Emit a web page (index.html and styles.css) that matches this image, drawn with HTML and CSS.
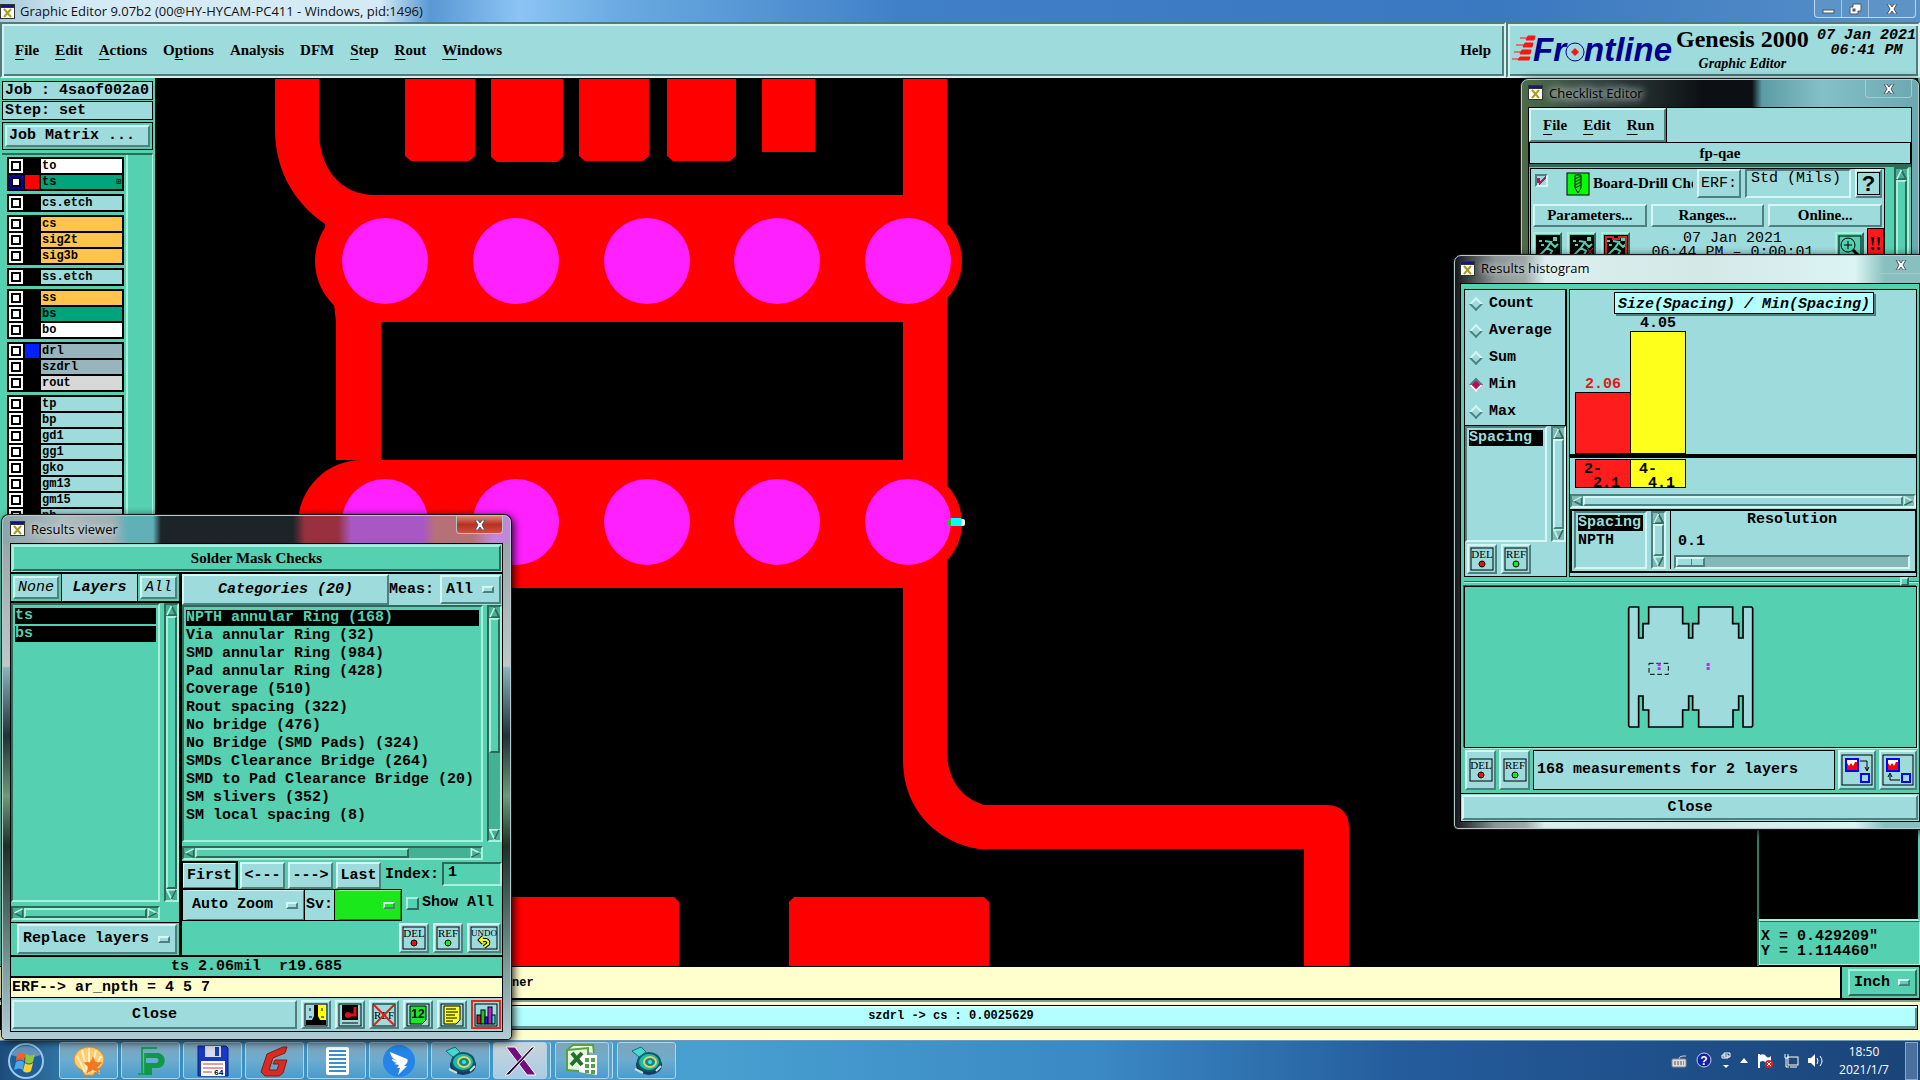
FILE: index.html
```html
<!DOCTYPE html>
<html lang="en">
<head>
    <meta charset="UTF-8">
    <meta name="viewport" content="width=device-width, initial-scale=1.0">
    <title>Graphic Editor 9.07b2</title>
    <link rel="stylesheet" href="styles.css">
</head>
<body>

<!-- shared icons -->
<svg class="sprite" width="0" height="0">
    <symbol id="xwin" viewBox="0 0 15 15">
        <rect width="15" height="15" fill="#333"/><rect x="1" y="4" width="13" height="10" fill="#fff"/><rect x="1" y="1" width="13" height="2" fill="#14148c"/>
        <path d="M4 5l7 8M11 5l-7 8" stroke="#a8a020" stroke-width="2"/>
    </symbol>
    <symbol id="close-x" viewBox="0 0 12 10">
        <path d="M1 0h3l2 3 2-3h3L8 5l3 5H8L6 7l-2 3H1l3-5z" fill="#fff" stroke="#4a5566" stroke-width="1"/>
    </symbol>
    <symbol id="up" viewBox="0 0 12 12">
        <path d="M6 1L1 11H11Z" fill="none" stroke="#2c6b5a" stroke-width="2"/><path d="M6 1L1 11" stroke="#b8f4e4" stroke-width="2"/>
    </symbol>
    <symbol id="down" viewBox="0 0 12 12">
        <path d="M1 1H11L6 11Z" fill="none" stroke="#b8f4e4" stroke-width="2"/><path d="M11 1L6 11" stroke="#2c6b5a" stroke-width="2"/>
    </symbol>
    <symbol id="left" viewBox="0 0 12 12">
        <path d="M11 1V11L1 6Z" fill="none" stroke="#2c6b5a" stroke-width="2"/><path d="M11 1L1 6" stroke="#b8f4e4" stroke-width="2"/>
    </symbol>
    <symbol id="right" viewBox="0 0 12 12">
        <path d="M1 11V1L11 6Z" fill="none" stroke="#b8f4e4" stroke-width="2"/><path d="M1 11L11 6" stroke="#2c6b5a" stroke-width="2"/>
    </symbol>
    <symbol id="runner" viewBox="0 0 24 24">
        <rect width="24" height="24" fill="#000"/>
        <path d="M3 6h3M5 10h3M9 6l6 1-4 6 5 3-3 6M11 13l-7 7M15 8l4 4 3-3M18 3h2v2h-2z" fill="none" stroke="#55d0b0" stroke-width="2"/>
    </symbol>
    <symbol id="disk-pc" viewBox="0 0 34 32">
        <ellipse cx="19" cy="20" rx="13" ry="10" fill="#193a5c"/><ellipse cx="19" cy="17" rx="11" ry="9" fill="#20b8a8" stroke="#0c5a60" stroke-width="2"/>
        <ellipse cx="20" cy="17" rx="6" ry="5" fill="#0c8c88" stroke="#e8d060" stroke-width="2"/><ellipse cx="20" cy="17" rx="2" ry="2" fill="#50e0c8"/>
        <path d="M2 6l9-4 5 5-7 5z" fill="#48d8d0" stroke="#107078"/><path d="M5 24l8 4M26 26l5-5" stroke="#c8dce0" stroke-width="2"/>
    </symbol>
</svg>

<header class="titlebar">
    <svg class="win-icon"><use href="#xwin"/></svg>
    <span>Graphic Editor 9.07b2 (00@HY-HYCAM-PC411 - Windows, pid:1496)</span>
    <div class="win-buttons">
        <button aria-label="Minimize"><svg width="13" height="12"><rect x="1" y="7" width="11" height="3" fill="#fff" stroke="#4a5566"/></svg></button>
        <button aria-label="Restore"><svg width="13" height="12"><path d="M4 1h8v7h-3v3H1V4h3z" fill="#fff" stroke="#4a5566"/><rect x="4" y="6" width="2" height="2" fill="#3c6ba0" stroke="#4a5566"/></svg></button>
        <button class="wide" aria-label="Close"><svg width="12" height="10"><use href="#close-x"/></svg></button>
    </div>
</header>

<div class="topbar">
    <nav class="menubar frame">
        <button><u>F</u>ile</button>
        <button><u>E</u>dit</button>
        <button><u>A</u>ctions</button>
        <button>O<u>p</u>tions</button>
        <button>Analysis</button>
        <button>DFM</button>
        <button><u>S</u>tep</button>
        <button><u>R</u>out</button>
        <button><u>W</u>indows</button>
        <button class="help">Help</button>
    </nav>
    <div class="brand frame">
        <svg class="logo" viewBox="0 0 162 30">
            <g stroke="#ff1414" fill="#ff1414"><path d="M8 3h14M4 10h16M2 17h16M0 24h16" stroke-width="1"/><path d="M16 1h7l-1 4h-8zM13 8h8l-1 4h-9zM10 15h9l-1 4h-10zM8 22h10l-1 3h-11z"/></g>
            <text x="21" y="26" class="logo-text">Fr</text>
            <text x="72" y="26" class="logo-text">ntline</text>
            <circle cx="63" cy="17" r="9" fill="none" stroke="#00008b" stroke-width="1"/><path d="M63 13l4 4-4 4-4-4z" fill="#ff1414"/>
        </svg>
        <div class="product"><strong>Genesis 2000</strong><em>Graphic Editor</em></div>
        <div class="clock">07 Jan 2021<br>06:41 PM</div>
    </div>
</div>

<main class="workspace">
    <aside class="sidebar">
        <div class="job">Job : 4saof002a0</div>
        <div class="job">Step: set</div>
        <div class="matrix"><button class="btn">Job Matrix ...</button></div>
        <div class="layers">
            <div class="layer-list">
                <div class="group">
                    <label class="layer white"><input type="checkbox"><i></i><span>to</span></label>
                    <label class="layer green current"><input type="checkbox"><i class="red"></i><span>ts<b>⊞</b></span></label>
                </div>
                <div class="group">
                    <label class="layer"><input type="checkbox"><i></i><span>cs.etch</span></label>
                </div>
                <div class="group">
                    <label class="layer orange"><input type="checkbox"><i></i><span>cs</span></label>
                    <label class="layer orange"><input type="checkbox"><i></i><span>sig2t</span></label>
                    <label class="layer orange"><input type="checkbox"><i></i><span>sig3b</span></label>
                </div>
                <div class="group">
                    <label class="layer"><input type="checkbox"><i></i><span>ss.etch</span></label>
                </div>
                <div class="group">
                    <label class="layer orange"><input type="checkbox"><i></i><span>ss</span></label>
                    <label class="layer green"><input type="checkbox"><i></i><span>bs</span></label>
                    <label class="layer white"><input type="checkbox"><i></i><span>bo</span></label>
                </div>
                <div class="group">
                    <label class="layer slate"><input type="checkbox"><i class="blue"></i><span>drl</span></label>
                    <label class="layer slate"><input type="checkbox"><i></i><span>szdrl</span></label>
                    <label class="layer grey"><input type="checkbox"><i></i><span>rout</span></label>
                </div>
                <div class="group">
                    <label class="layer"><input type="checkbox"><i></i><span>tp</span></label>
                    <label class="layer"><input type="checkbox"><i></i><span>bp</span></label>
                    <label class="layer"><input type="checkbox"><i></i><span>gd1</span></label>
                    <label class="layer"><input type="checkbox"><i></i><span>gg1</span></label>
                    <label class="layer"><input type="checkbox"><i></i><span>gko</span></label>
                    <label class="layer"><input type="checkbox"><i></i><span>gm13</span></label>
                    <label class="layer"><input type="checkbox"><i></i><span>gm15</span></label>
                    <label class="layer"><input type="checkbox"><i></i><span>ph</span></label>
                </div>
            </div>
        </div>
    </aside>

    <section class="canvas">
        <svg viewBox="155 79 1602 888" preserveAspectRatio="xMinYMin slice">
            <g fill="#f00">
                <path d="M275 79H319V130C319 168 340 195 375 195H903V79H947V222H903L336 322L325 224C290 200 275 165 275 130Z"/>
                <path d="M405 79h70v77l-6 5h-58l-6-5zM491 79h72v78l-6 5h-60l-6-5zM579 79h70v77l-6 5h-58l-6-5zM667 79h69v77l-6 5h-57l-6-5zM762 79h53v73h-53z"/>
                <path d="M350 195H947V322H381V460H903V322H947V753C948 781 962 798 984 805H1327Q1349 806 1349 828V967H1304V849H979C935 842 903 808 903 760V588H362V460H336V300Z"/>
                <circle cx="376" cy="261" r="61"/>
                <circle cx="908" cy="261" r="54"/>
                <circle cx="362" cy="524" r="64"/>
                <circle cx="908" cy="523" r="54"/>
                <path d="M480 897H674l5 5V967H480zM789 902l5-5H984l5 5V967H789z"/>
            </g>
            <g fill="#ff20ff">
                <circle cx="385" cy="261" r="43"/><circle cx="516" cy="261" r="43"/><circle cx="647" cy="261" r="43"/><circle cx="777" cy="261" r="43"/><circle cx="908" cy="261" r="43"/>
                <circle cx="385" cy="522" r="43"/><circle cx="516" cy="522" r="43"/><circle cx="647" cy="522" r="43"/><circle cx="777" cy="522" r="43"/><circle cx="908" cy="522" r="43"/>
            </g>
            <rect x="948" y="519" width="5" height="7" fill="#18c818"/><rect x="960" y="519" width="5" height="7" rx="2" fill="#fff"/><rect x="951" y="518" width="10" height="8" fill="#0ff"/>
        </svg>
    </section>

    <aside class="overview">
        <div class="overview-map"></div>
        <div class="coords">X = 0.429209"<br>Y = 1.114460"</div>
    </aside>
</main>

<div class="message-row">
    <div class="message">ner</div>
    <div class="units"><span class="option teal"><select aria-label="Units"><option>Inch</option></select><i></i></span></div>
</div>
<div class="status"><div>szdrl -&gt; cs : 0.0025629</div></div>

<footer class="taskbar">
    <button class="start" aria-label="Start">
        <svg width="40" height="38" viewBox="0 0 40 38"><circle cx="20" cy="19" r="17" fill="#1f5f98" stroke="#9cc8e8" stroke-width="2"/><path d="M5 13a16 14 0 0 1 30 0q-15 5-30 0" fill="#8cb8d8" opacity=".6"/>
        <path d="M11 12q4-3 8 0l-1 7q-4-3-8 0z" fill="#f0622c"/><path d="M20 12q4 3 9 0l-2 8q-4 3-8 0z" fill="#8cc83c"/><path d="M10 20q4-3 8 0l-1 8q-4-3-9 0z" fill="#48a8f0"/><path d="M19 21q4 3 8 0l-2 8q-4 3-8 0z" fill="#ffd030"/></svg>
    </button>
    <button class="task" aria-label="Shell"><svg width="34" height="32"><path d="M13 30L10 25C2 22 0 13 4 9 7 4 12 2 17 2s10 2 13 7c4 4 2 13-6 16l-3 5z" fill="#ffcc70" stroke="#e89030"/><path d="M17 3v24M10 5l5 22M24 5l-5 22M5 11l8 16M29 11l-8 16" stroke="#fff0c0" stroke-width="2"/><path d="M21 11l3 6h7l-5 5 2 7-7-4-7 4 2-7-5-5h7z" fill="#f07820" stroke="#ffd090" stroke-dasharray="2"/></svg></button>
    <button class="task" aria-label="P client"><svg width="34" height="32"><path d="M8 29V3h15M4 29h7V8" stroke="#18a050" fill="none" stroke-width="2"/><path d="M12 8h12c9 1 9 14 0 15h-6v7h-7V18h12q3-3 0-5H12z" fill="#109848"/></svg></button>
    <button class="task" aria-label="Disk"><svg width="34" height="32"><path d="M2 1h28l2 2v28H2z" fill="#1838c8" stroke="#0c1c80"/><rect x="9" y="1" width="16" height="11" fill="#d8dce8"/><rect x="19" y="2" width="4" height="9" fill="#1838c8"/><rect x="5" y="16" width="24" height="15" fill="#fff"/><path d="M7 19h20M7 23h20M7 27h9" stroke="#c04040"/><text x="18" y="30" class="disk-text">64</text></svg></button>
    <button class="task" aria-label="G client"><svg width="34" height="32"><path d="M9 9L25 2h4l-2 6-12 5-4 12h8l2-6h-6l2-4h12l-4 13-4 3H7l-4-4z" fill="#d82c20" stroke="#901810"/></svg></button>
    <button class="task" aria-label="Notes"><svg width="34" height="32"><rect x="6" y="2" width="23" height="28" rx="2" fill="#fff"/><path d="M9 6h17M9 10h17M9 14h17M9 18h17M9 22h17M9 26h17" stroke="#3890c8" stroke-width="2"/></svg></button>
    <button class="task" aria-label="Chat"><svg width="34" height="32"><circle cx="17" cy="16" r="16" fill="#2484e8"/><path d="M8 7l17 7c2 2-1 6-3 7h3l-9 9 2-7h-3l2-3-5-1 3-1c-4-1-5-3-5-4l4 1c-4-2-5-4-6-8z" fill="#fff"/></svg></button>
    <button class="task" aria-label="Genesis"><svg width="34" height="32"><use href="#disk-pc"/></svg></button>
    <button class="task active" aria-label="Xmanager"><svg width="34" height="32"><path d="M3 2h9l21 28h-9z" fill="#701080" stroke="#fff"/><path d="M29 2h3L6 30H2z" fill="#301040" stroke="#fff" stroke-width="1"/></svg></button>
    <button class="task stack" aria-label="Excel"><svg width="34" height="32"><path d="M3 4l5-4h20l1 8" fill="#eaf6e4" stroke="#58a040" stroke-width="2"/><path d="M2 5l21-2v24L2 25z" fill="#e4f4dc" stroke="#58a040" stroke-width="2"/><path d="M14 10h18v20l-18-3z" fill="#fff"/><path d="M7 8l10 12M17 8L6 20" stroke="#207028" stroke-width="4"/><path d="M20 13h4v4h-4zM26 13h4v4h-4zM20 19h4v4h-4zM26 19h4v4h-4zM20 25h4v3h-4zM26 25h4v4h-4z" fill="#58a048"/></svg></button>
    <button class="task" aria-label="Genesis"><svg width="34" height="32"><use href="#disk-pc"/></svg></button>

    <div class="tray">
        <svg width="16" height="16"><path d="M8 6q0-3 4-3h3" stroke="#ccc" fill="none"/><rect x="1" y="6" width="14" height="8" rx="1" fill="#ddd" stroke="#888"/><path d="M3 9h10M3 11h10" stroke="#555" stroke-dasharray="2 1"/></svg>
        <svg width="18" height="18"><circle cx="9" cy="8" r="7" fill="#1020a8" stroke="#ccd"/><text x="9" y="13" text-anchor="middle" class="help-text">?</text></svg>
        <svg width="10" height="18"><path d="M3 1h6v4H3zM1 3h6v3H1z" fill="none" stroke="#fff"/><path d="M2 13h6l-3 3z" fill="#fff"/></svg>
        <svg width="10" height="10"><path d="M1 7l4-5 4 5z" fill="#fff"/></svg>
        <svg width="18" height="16"><path d="M2 1v14" stroke="#fff" stroke-width="2"/><path d="M3 2q4-2 6 1t5 0v6q-4 2-6 0t-5 0z" fill="#fff"/><circle cx="12" cy="11" r="4" fill="#d82820"/><path d="M10 9l4 4M14 9l-4 4" stroke="#fff"/></svg>
        <svg width="16" height="16"><rect x="5" y="4" width="10" height="8" fill="#204878" stroke="#fff"/><path d="M7 14h7M2 1v4h3V1M3 5v9h3" stroke="#fff" fill="none"/></svg>
        <svg width="16" height="16"><path d="M1 5h3l4-4v13l-4-4H1z" fill="#fff"/><path d="M10 5q2 3 0 6M13 3q4 5 0 10" stroke="#fff" fill="none"/></svg>
        <time>18:50<br>2021/1/7</time>
        <button class="show-desktop" aria-label="Show desktop"></button>
    </div>
</footer>

<!-- Checklist Editor -->
<section class="window checklist">
    <header>
        <svg class="win-icon"><use href="#xwin"/></svg><h2>Checklist Editor</h2>
        <button class="x" aria-label="Close"><svg width="12" height="10"><use href="#close-x"/></svg></button>
    </header>
    <div class="client">
        <div class="cl-menu"><nav><button><u>F</u>ile</button><button><u>E</u>dit</button><button><u>R</u>un</button></nav></div>
        <div class="cl-name">fp-qae</div>
        <div class="cl-body">
            <div class="cl-check">
                <div class="cl-row">
                    <input type="checkbox" class="tick" id="drill" checked>
                    <svg width="22" height="22"><rect width="22" height="22" fill="#0f0" stroke="#000"/><path d="M8 2h6v13l-3 5-3-5zM8 6l6-3M8 9l6-3M8 12l6-3M8 15l6-3" fill="none" stroke="#000"/></svg>
                    <label for="drill">Board-Drill Che</label>
                    <button class="btn light">ERF:</button>
                    <input class="field light" aria-label="ERF" value="Std (Mils)">
                    <button class="btn" aria-label="Help"><span class="q">?</span></button>
                </div>
                <div class="cl-actions">
                    <button class="btn">Parameters...</button><button class="btn">Ranges...</button><button class="btn">Online...</button>
                </div>
                <div class="cl-run">
                    <button class="btn green" aria-label="Run"><svg width="24" height="24"><use href="#runner"/></svg></button>
                    <button class="btn green" aria-label="Run selected"><svg width="24" height="24"><use href="#runner"/><path d="M17 13l6 7M23 13l-6 7" stroke="#e02020"/></svg></button>
                    <button class="btn green" aria-label="Run region"><svg width="24" height="24"><use href="#runner"/><path d="M2 24V2h7v2h6V2h7v22" fill="none" stroke="#e02020" stroke-width="2"/></svg></button>
                    <p>07 Jan 2021<br>06:44 PM – 0:00:01</p>
                    <button class="btn green" aria-label="Zoom"><svg width="24" height="24"><rect x="1" y="1" width="22" height="22" fill="none" stroke="#000"/><circle cx="10" cy="10" r="7" fill="none" stroke="#000"/><path d="M6 10h8M10 6v8" stroke="#000"/><path d="M15 15l7 7" stroke="#000" stroke-width="3"/></svg></button>
                    <span class="alert">!!</span>
                </div>
            </div>
            <div class="vbar"><svg><use href="#up"/></svg><i></i></div>
        </div>
    </div>
</section>

<!-- Results histogram -->
<section class="window histogram">
    <header>
        <svg class="win-icon"><use href="#xwin"/></svg><h2>Results histogram</h2>
        <button class="x" aria-label="Close"><svg width="12" height="10"><use href="#close-x"/></svg></button>
    </header>
    <div class="client">
        <div class="h-top">
            <div class="h-side">
                <div class="radios">
                    <label><input type="radio" name="fn">Count</label>
                    <label><input type="radio" name="fn">Average</label>
                    <label><input type="radio" name="fn">Sum</label>
                    <label><input type="radio" name="fn" checked>Min</label>
                    <label><input type="radio" name="fn">Max</label>
                </div>
                <div class="h-list">
                    <ul class="list"><li class="on">Spacing</li></ul>
                    <div class="vbar light"><svg><use href="#up"/></svg><i></i><svg><use href="#down"/></svg></div>
                </div>
                <div class="h-tools">
                    <button class="btn icon" aria-label="Delete"><svg viewBox="0 0 24 24"><rect x="1" y="1" width="22" height="22" fill="none" stroke="#000"/><text x="12" y="11" class="icon-text" text-anchor="middle">DEL</text><circle cx="12" cy="17" r="3" fill="#e8121c" stroke="#000"/></svg></button>
                    <button class="btn icon" aria-label="Reference"><svg viewBox="0 0 24 24"><rect x="1" y="1" width="22" height="22" fill="none" stroke="#000"/><text x="12" y="11" class="icon-text" text-anchor="middle">REF</text><circle cx="12" cy="17" r="3" fill="#18e81c" stroke="#000"/></svg></button>
                </div>
            </div>
            <div class="h-main">
                <div class="chart">
                    <h3>Size(Spacing) / Min(Spacing)</h3>
                    <div class="bars">
                        <div class="col red"><span>2.06</span><i style="height: 62px"></i></div>
                        <div class="col yellow"><span>4.05</span><i style="height: 123px"></i></div>
                    </div>
                    <div class="ranges"><pre class="red">2-
 2.1</pre><pre class="yellow">4-
 4.1</pre></div>
                    <div class="hbar light"><svg><use href="#left"/></svg><i></i><svg><use href="#right"/></svg></div>
                </div>
                <div class="h-bottom">
                    <ul class="list"><li class="on">Spacing</li><li>NPTH</li></ul>
                    <div class="vbar light"><svg><use href="#up"/></svg><i></i><svg><use href="#down"/></svg></div>
                    <div class="resolution">
                        <label for="res">Resolution</label>
                        <output>0.1</output>
                        <input type="range" id="res" min="0" max="10" value="0">
                    </div>
                </div>
            </div>
        </div>
        <div class="sash"><i></i></div>
        <div class="board">
            <svg width="128" height="124" viewBox="532 132 384 372">
                <path d="M537 142l3-4H567V231H580V188H597V138H699V188H717V231H729V188H747V138H849V188H867V231H880V138H906l3 4V494l-3 4H880V405H867V447H850V498H747V447H729V405H717V447H699V498H597V447H580V405H567V498H540l-3-4Z" fill="#9edbdc" stroke="#000" stroke-width="5"/>
                <rect x="598" y="307" width="58" height="33" fill="none" stroke="#000" stroke-width="3" stroke-dasharray="14 8"/>
                <path d="M624 307h9v8h-9zM624 319h9v8h-9zM771 306h9v9h-9zM771 318h9v9h-9z" fill="#d020e0"/>
            </svg>
        </div>
        <div class="h-foot">
            <button class="btn icon" aria-label="Delete"><svg viewBox="0 0 24 24"><rect x="1" y="1" width="22" height="22" fill="none" stroke="#000"/><text x="12" y="11" class="icon-text" text-anchor="middle">DEL</text><circle cx="12" cy="17" r="3" fill="#e8121c" stroke="#000"/></svg></button>
            <button class="btn icon" aria-label="Reference"><svg viewBox="0 0 24 24"><rect x="1" y="1" width="22" height="22" fill="none" stroke="#000"/><text x="12" y="11" class="icon-text" text-anchor="middle">REF</text><circle cx="12" cy="17" r="3" fill="#18e81c" stroke="#000"/></svg></button>
            <p>168 measurements for 2 layers</p>
            <button class="btn" aria-label="Save picture"><svg width="32" height="32"><rect x="1" y="1" width="30" height="30" fill="none" stroke="#000"/><rect x="5" y="5" width="12" height="12" fill="#fff" stroke="#00f" stroke-width="2"/><path d="M6 16V9l2 3 2-3 2 3 2-4h2v8z" fill="#f00"/><path d="M19 7h7v9M24 13l2 4 2-4" fill="none" stroke="#000"/><rect x="20" y="20" width="8" height="8" fill="none" stroke="#00f" stroke-width="2"/></svg></button>
            <button class="btn" aria-label="Load picture"><svg width="32" height="32"><rect x="1" y="1" width="30" height="30" fill="none" stroke="#000"/><rect x="5" y="5" width="12" height="12" fill="#fff" stroke="#00f" stroke-width="2"/><path d="M6 16V9l2 3 2-3 2 3 2-4h2v8z" fill="#f00"/><path d="M18 26H8v-5M6 23l2-4 2 4" fill="none" stroke="#000"/><rect x="20" y="20" width="8" height="8" fill="none" stroke="#00f" stroke-width="2"/></svg></button>
        </div>
        <div class="h-close"><button class="btn">Close</button></div>
    </div>
</section>

<!-- Results viewer -->
<section class="window viewer">
    <header>
        <svg class="win-icon"><use href="#xwin"/></svg><h2>Results viewer</h2>
        <button class="x danger" aria-label="Close"><svg width="12" height="10"><use href="#close-x"/></svg></button>
    </header>
    <div class="client">
        <div class="v-title"><button class="btn green">Solder Mask Checks</button></div>
        <div class="v-cols">
            <div class="v-left">
                <div class="v-tabs"><button class="btn">None</button><strong>Layers</strong><button class="btn">All</button></div>
                <div class="v-scroll">
                    <ul class="list"><li class="on">ts</li><li class="on">bs</li></ul>
                    <div class="vbar"><svg><use href="#up"/></svg><i></i><svg><use href="#down"/></svg></div>
                </div>
                <div class="hbar"><svg><use href="#left"/></svg><i></i><svg><use href="#right"/></svg></div>
                <div class="v-replace"><span class="option"><select aria-label="Mode"><option>Replace layers</option></select><i></i></span></div>
            </div>
            <div class="v-right">
                <div class="v-cat">
                    <button class="btn">Categories (20)</button>
                    <label for="meas">Meas:</label>
                    <span class="option"><select id="meas"><option>All</option></select><i></i></span>
                </div>
                <div class="v-scroll">
                    <ul class="list">
                        <li class="on">NPTH annular Ring (168)</li>
                        <li>Via annular Ring (32)</li>
                        <li>SMD annular Ring (984)</li>
                        <li>Pad annular Ring (428)</li>
                        <li>Coverage (510)</li>
                        <li>Rout spacing (322)</li>
                        <li>No bridge (476)</li>
                        <li>No Bridge (SMD Pads) (324)</li>
                        <li>SMDs Clearance Bridge (264)</li>
                        <li>SMD to Pad Clearance Bridge (20)</li>
                        <li>SM slivers (352)</li>
                        <li>SM local spacing (8)</li>
                    </ul>
                    <div class="vbar"><svg><use href="#up"/></svg><i class="part"></i><svg><use href="#down"/></svg></div>
                </div>
                <div class="hbar"><svg><use href="#left"/></svg><i class="part"></i><svg><use href="#right"/></svg></div>
                <div class="v-nav">
                    <button class="btn default">First</button><button class="btn">&lt;---</button><button class="btn">---&gt;</button><button class="btn">Last</button>
                    <label for="index">Index:</label><input class="field" id="index" value="1">
                </div>
                <div class="v-zoom">
                    <span class="option"><select aria-label="Zoom"><option>Auto Zoom</option></select><i></i></span>
                    <label for="sv">Sv:</label>
                    <span class="option lime"><select id="sv"><option></option></select><i></i></span>
                    <label class="show"><input type="checkbox">Show All</label>
                </div>
                <div class="v-tools">
                    <button class="btn icon" aria-label="Delete"><svg viewBox="0 0 24 24"><rect x="1" y="1" width="22" height="22" fill="none" stroke="#000"/><text x="12" y="11" class="icon-text" text-anchor="middle">DEL</text><circle cx="12" cy="17" r="3" fill="#e8121c" stroke="#000"/></svg></button>
                    <button class="btn icon" aria-label="Reference"><svg viewBox="0 0 24 24"><rect x="1" y="1" width="22" height="22" fill="none" stroke="#000"/><text x="12" y="11" class="icon-text" text-anchor="middle">REF</text><circle cx="12" cy="17" r="3" fill="#18e81c" stroke="#000"/></svg></button>
                    <button class="btn icon undo" aria-label="Undo"><svg viewBox="0 0 28 24"><rect x="1" y="1" width="26" height="22" fill="none" stroke="#000"/><text x="14" y="10" class="icon-text small" text-anchor="middle">UNDO</text><path d="M11 14h5q3 1 2 4l-4 3M13 11l-3 3 3 3" fill="none" stroke="#000" stroke-width="4"/><path d="M11 14h5q3 1 2 4l-4 3M13 11l-3 3 3 3" fill="none" stroke="#ff0" stroke-width="2"/></svg></button>
                </div>
            </div>
        </div>
        <div class="v-result">ts 2.06mil&nbsp; r19.685</div>
        <div class="v-erf">ERF--&gt; ar_npth = 4 5 7</div>
        <div class="v-foot">
            <button class="btn close">Close</button>
            <button class="btn icon" aria-label="View"><svg viewBox="0 0 24 24"><rect x="1" y="1" width="22" height="22" fill="#9edbdc" stroke="#000"/><rect x="14" y="2" width="8" height="18" fill="#ff0"/><path d="M10 2h4v11l2 4h6v5H2v-5h6l2-4z" fill="#000"/><path d="M6 5v3M18 5v3M5 14h3M17 14h3" stroke="#000"/></svg></button>
            <button class="btn icon" aria-label="Snapshot"><svg viewBox="0 0 24 24"><rect x="1" y="1" width="22" height="22" fill="none" stroke="#000"/><rect x="4" y="2" width="16" height="15" fill="#000"/><circle cx="10" cy="12" r="3" fill="#e01018"/><path d="M12 12h5V4" stroke="#e01018" stroke-width="3" fill="none"/><path d="M4 20h16" stroke="#000"/></svg></button>
            <button class="btn icon" aria-label="No reference"><svg viewBox="0 0 24 24"><rect x="1" y="1" width="22" height="22" fill="none" stroke="#000"/><text x="12" y="16" class="icon-text" text-anchor="middle">REF</text><path d="M2 2l20 20M22 2L2 22" stroke="#e02018" stroke-width="2"/></svg></button>
            <button class="btn icon" aria-label="Numbers"><svg viewBox="0 0 24 24"><rect x="1" y="1" width="22" height="22" fill="none" stroke="#000"/><path d="M4 3h16v14l-4 4H4z" fill="#18e828" stroke="#000"/><text x="12" y="15" class="icon-num" text-anchor="middle">12</text></svg></button>
            <button class="btn icon" aria-label="Report"><svg viewBox="0 0 24 24"><rect x="1" y="1" width="22" height="22" fill="none" stroke="#000"/><path d="M4 3h16v14l-4 4H4z" fill="#ff2" stroke="#000"/><path d="M6 6h10M6 9h12M6 12h9M6 15h11M6 18h7" stroke="#000"/></svg></button>
            <button class="btn icon chosen" aria-label="Histogram"><svg viewBox="0 0 24 24"><rect x="1" y="1" width="22" height="22" fill="none" stroke="#000"/><g stroke="#000"><rect x="3" y="12" width="4" height="9" fill="#e01018"/><rect x="7" y="7" width="4" height="14" fill="#18c828"/><rect x="11" y="14" width="3" height="7" fill="#22f"/><rect x="14" y="4" width="4" height="17" fill="#c020d0"/><rect x="18" y="12" width="3" height="9" fill="#2ee"/></g></svg></button>
        </div>
    </div>
</section>

</body>
</html>
```

FILE: styles.css
```css
* {
    box-sizing: border-box;
}
body {
    margin: 0;
    height: 100vh;
    overflow: hidden;
    display: flex;
    flex-direction: column;
    background: #000;
    color: #000;
    font: bold 15px/18px "Liberation Mono", monospace;
}
button, input, select, label, output {
    font: inherit;
    color: inherit;
}
button {
    padding: 0;
    border: 0;
    background: none;
}
ul, p, h2, h3, pre {
    margin: 0;
    padding: 0;
    list-style: none;
    font: inherit;
}
u {
    text-underline-offset: 4px;
    text-decoration-thickness: 1px;
}
svg {
    display: block;
    flex: none;
    overflow: visible;
}
.sprite {
    position: absolute;
}
.icon-text {
    font: 11px "Liberation Serif", serif;
}
.icon-text.small {
    font-size: 9px;
}
.icon-num {
    font: bold 12px "Liberation Sans", sans-serif;
}
.disk-text {
    font: bold 8px "Liberation Mono", monospace;
}
.help-text {
    font: bold 12px "Liberation Sans", sans-serif;
    fill: #fff;
}

/* shared controls */
.frame {
    background: #9edbdc;
    border: 2px solid;
    border-color: #507c7c #d4f2f2 #d4f2f2 #507c7c;
    box-shadow: inset 2px 2px 0 #d4f2f2, inset -2px -2px 0 #507c7c;
}
.btn {
    display: flex;
    align-items: center;
    justify-content: center;
    background: #9edbdc;
    border: 2px solid;
    border-color: #d4f6f4 #4f8080 #4f8080 #d4f6f4;
    white-space: nowrap;
}
.btn.green {
    background: #55d0b0;
    border-color: #a8f0dc #2c6b5a #2c6b5a #a8f0dc;
}
.btn.icon {
    width: 30px;
    height: 30px;
}
.btn.icon svg {
    width: 24px;
    height: 24px;
}
.field {
    min-width: 0;
    padding: 0 4px;
    background: none;
    border: 2px solid;
    border-color: #2c6b5a #a8f0dc #a8f0dc #2c6b5a;
}
.field.light {
    border-color: #4f8080 #d4f6f4 #d4f6f4 #4f8080;
}
.option {
    display: flex;
    align-items: center;
    background: #9edbdc;
    border: 2px solid;
    border-color: #d4f6f4 #4f8080 #4f8080 #d4f6f4;
}
.option.teal {
    background: #55d0b0;
    border-color: #a8f0dc #2c6b5a #2c6b5a #a8f0dc;
}
.option.lime {
    background: #1be81b;
    border-color: #8ff58f #129012 #129012 #8ff58f;
}
.option select {
    appearance: none;
    flex: 1;
    min-width: 0;
    padding: 0 0 0 4px;
    border: 0;
    background: none;
}
.option i {
    width: 12px;
    height: 7px;
    margin-right: 5px;
    border: 2px solid;
    border-color: #d4f6f4 #4f8080 #4f8080 #d4f6f4;
}
.list {
    flex: 1;
    min-width: 0;
    padding: 2px;
    border: 2px solid;
    border-color: #2c6b5a #a8f0dc #a8f0dc #2c6b5a;
    overflow: hidden;
}
.list li {
    height: 16px;
    margin-bottom: 2px;
    line-height: 16px;
    white-space: nowrap;
}
.list .on {
    background: #000;
    color: #55d0b0;
}
.vbar, .hbar {
    display: flex;
    background: #44b094;
    border: 2px solid;
    border-color: #2c6b5a #a8f0dc #a8f0dc #2c6b5a;
}
.vbar {
    width: 15px;
    flex: none;
    flex-direction: column;
}
.hbar {
    height: 14px;
}
.vbar svg, .hbar svg {
    width: 11px;
    height: 11px;
}
.hbar svg {
    height: 10px;
}
.vbar i, .hbar i {
    flex: 1;
    background: #55d0b0;
    border: 2px solid;
    border-color: #a8f0dc #2c6b5a #2c6b5a #a8f0dc;
}
.vbar.light, .hbar.light {
    background: #84b8b8;
    border-color: #4f8080 #d4f6f4 #d4f6f4 #4f8080;
}
.vbar.light i, .hbar.light i {
    background: #9edbdc;
    border-color: #d4f6f4 #4f8080 #4f8080 #d4f6f4;
}
.vbar .part {
    flex: 0 1 58%;
    margin-bottom: auto;
}
.hbar .part {
    flex: 0 1 72%;
    margin-right: auto;
}

/* main window */
.titlebar {
    flex: none;
    height: 22px;
    display: flex;
    align-items: center;
    gap: 5px;
    background: linear-gradient(90deg, #a9c9dc, #d4ebf5 80px, #d4ebf5 380px, #5a98d4 430px, #8cc4f4 520px, #6aaae0 620px, #4080c8 900px, #3a78c0 1500px, #5890c8);
    font: 13px/20px "Open Sans", sans-serif;
    color: #111;
}
.win-icon {
    width: 15px;
    height: 15px;
}
.win-buttons {
    display: flex;
    margin: 0 4px 4px auto;
    border: 1px solid #c4d8ec;
    border-top: 0;
    border-radius: 0 0 4px 4px;
    background: #5d94c8;
}
.win-buttons button {
    width: 27px;
    height: 17px;
    display: grid;
    place-items: center;
    border-right: 1px solid #a8c4e0;
}
.win-buttons .wide {
    width: 46px;
    border: 0;
}
.topbar {
    flex: none;
    display: flex;
    height: 56px;
}
.menubar {
    flex: 1;
    display: flex;
    align-items: center;
    gap: 16px;
    padding: 0 13px;
    font: bold 15px "Liberation Serif", serif;
}
.menubar .help {
    margin-left: auto;
}
.brand {
    width: 414px;
    display: flex;
    gap: 2px;
    padding: 3px 2px 0 4px;
}
.logo {
    width: 162px;
    height: 30px;
    margin-top: 8px;
}
.logo-text {
    font: italic bold 33px "Liberation Sans", sans-serif;
    fill: #00008b;
}
.product {
    display: flex;
    flex-direction: column;
    align-items: center;
    font: bold 24px/24px "Liberation Serif", serif;
}
.product em {
    font-size: 14px;
    line-height: 26px;
}
.clock {
    margin-left: auto;
    padding-top: 1px;
    font-style: italic;
    line-height: 15px;
    text-align: center;
    white-space: nowrap;
}
.workspace {
    flex: 1;
    min-height: 0;
    display: flex;
}
.sidebar {
    width: 155px;
    padding: 3px 2px 0;
    display: flex;
    flex-direction: column;
    gap: 1px;
    background: #55d0b0;
    overflow: hidden;
}
.job {
    flex: none;
    height: 19px;
    padding-left: 2px;
    background: #9edbdc;
    border: 1px solid #000;
    white-space: nowrap;
    line-height: 18px;
}
.matrix {
    flex: none;
    margin-top: 1px;
    padding: 2px;
    border: 1px solid #000;
}
.matrix .btn {
    width: 100%;
    height: 22px;
    padding-left: 2px;
    justify-content: flex-start;
}
.layers {
    flex: 1;
    min-height: 0;
    margin-top: 2px;
    padding: 0 24px 0 5px;
    border-top: 2px solid #2c6b5a;
    border-right: 1px solid #a8f0dc;
    overflow: hidden;
}
.layer-list {
    display: flex;
    flex-direction: column;
    gap: 3px;
    padding: 2px 2px 0 0;
    border-right: 2px solid #a8f0dc;
}
.group {
    display: flex;
    flex-direction: column;
    gap: 2px;
    padding: 2px;
    background: #000;
    font-size: 12px;
}
.layer {
    display: flex;
    gap: 2px;
    height: 14px;
    line-height: 14px;
}
.layer input {
    appearance: none;
    width: 14px;
    height: 14px;
    margin: 0;
    background: #fff;
    border: 2px solid #fff;
    box-shadow: inset 0 0 0 2px #000;
}
.layer.current input {
    border-color: #0000b8;
}
.layer i {
    width: 14px;
}
.layer .red {
    background: #f00;
}
.layer .blue {
    background: #0020ff;
}
.layer span {
    flex: 1;
    display: flex;
    justify-content: space-between;
    padding: 0 1px;
    background: #9edbdc;
}
.layer b {
    font-size: 8px;
}
.layer.white span { background: #fff; }
.layer.green span { background: #00a47c; }
.layer.orange span { background: #ffc44c; }
.layer.slate span { background: #98b4bc; }
.layer.grey span { background: #d8d8d8; }
.canvas {
    flex: 1;
    min-width: 0;
    border-top: 1px solid #000;
    overflow: hidden;
}
.canvas svg {
    width: 100%;
    height: 100%;
}
.overview {
    width: 163px;
    display: flex;
    flex-direction: column;
    border-left: 2px solid #2c7c66;
}
.overview-map {
    flex: 1;
    border-right: 2px solid #55d0b0;
    border-bottom: 2px solid #a8f0dc;
}
.coords {
    height: 44px;
    margin-bottom: 1px;
    padding: 7px 1px;
    background: #55d0b0;
    border: 1px solid;
    border-color: #2c6b5a #a8f0dc #a8f0dc #a8f0dc;
    line-height: 15px;
}
.message-row {
    flex: none;
    display: flex;
    height: 34px;
    border-bottom: 2px solid #000;
    font-size: 12px;
}
.message {
    flex: 1;
    padding-left: 512px;
    background: #ffffcd;
    border-top: 1px solid #000;
    line-height: 33px;
}
.units {
    width: 80px;
    padding: 2px 2px 2px 6px;
    background: #55d0b0;
    border: solid #000;
    border-width: 1px 1px 0 2px;
    font-size: 15px;
}
.units .option {
    height: 27px;
}
.status {
    flex: none;
    padding: 3px 2px 10px 0;
    background: #ffffcd;
    border-top: 2px solid #7c9c98;
    font-size: 12px;
    text-align: center;
}
.status div {
    height: 25px;
    padding-right: 16px;
    line-height: 21px;
    background: #b3ffff;
    border: 1px solid #000;
    box-shadow: inset 0 2px 0 #e8ffff, inset -2px -3px 0 #5c9090;
}

/* taskbar */
.taskbar {
    flex: none;
    height: 40px;
    display: flex;
    align-items: center;
    gap: 3px;
    padding: 0 2px 0 6px;
    background: linear-gradient(90deg, #1c4c7c, #3a88b8 90px, #48a0d0 700px, #3a88c4 1100px, #245c9c 1400px, #1a4478);
    border-top: 1px solid #7098b8;
}
.start {
    width: 50px;
}
.task {
    width: 59px;
    height: 37px;
    display: grid;
    place-items: center;
    border: 1px solid #a8d4ec;
    border-radius: 3px;
    background: linear-gradient(#7fa4b8, #6cacd0 50%, #4a9ccc);
}
.task.active {
    background: linear-gradient(#c8d4dc, #a8cce4);
}
.task.active, .task.stack {
    width: 54px;
    margin-right: 5px;
    box-shadow: 3px 0 0 #5aa4cc, 4px 0 0 #b8dcf0;
}
.tray {
    display: flex;
    align-items: center;
    gap: 8px;
    height: 100%;
    margin-left: auto;
    color: #fff;
    font: 12px/18px "Open Sans", sans-serif;
    text-align: center;
}
.tray time {
    width: 66px;
}
.show-desktop {
    width: 13px;
    height: 38px;
    border: 1px solid #88a8c8;
    background: #4a70a0;
}

/* floating windows */
.window {
    position: absolute;
    padding: 0 8px 8px;
    border: 1px solid #b8ccd0;
    border-radius: 7px 7px 4px 4px;
    box-shadow: 0 0 0 1px #181818, 2px 2px 10px #000;
}
.window header {
    display: flex;
    align-items: center;
    gap: 6px;
    height: 27px;
    padding-bottom: 2px;
}
.window h2 {
    font: 13px "Open Sans", sans-serif;
    text-shadow: 0 0 6px #fff;
}
.x {
    align-self: flex-start;
    width: 47px;
    height: 18px;
    margin-left: auto;
    display: grid;
    place-items: center;
    border: 1px solid #a8c8cc;
    border-top: 0;
    border-radius: 0 0 4px 4px;
}
.danger {
    background: linear-gradient(#d88878, #b83020 50%, #d05040);
}

.checklist {
    top: 79px;
    right: 1px;
    width: 398px;
    height: 300px;
    padding: 0 6px;
    background: linear-gradient(90deg, #4c6c48, #3c4c48 60px, #0c1014 180px, #0c1014 230px, #5c9ca4 240px, #84c0c8 300px, #6ca8b0);
    overflow: hidden;
}
.checklist h2 {
    color: #000;
    text-shadow: 0 0 8px #b8c8c0, 0 0 8px #b8c8c0, 0 0 8px #b8c8c0;
}
.checklist .client {
    font: bold 15px "Liberation Serif", serif;
    background: #9edbdc;
    border: 1px solid #000;
}
.cl-menu nav {
    display: flex;
    align-items: center;
    gap: 16px;
    width: 137px;
    height: 34px;
    padding-left: 12px;
    border: 2px solid;
    border-color: #d4f6f4 #4f8080 #4f8080 #d4f6f4;
    box-shadow: 1px 0 0 #000;
}
.cl-name {
    height: 22px;
    border: 1px solid #000;
    line-height: 20px;
    text-align: center;
}
.cl-body {
    display: flex;
    gap: 9px;
    height: 200px;
    padding-right: 2px;
    background: #55d0b0;
    border-top: 3px solid #2c6b5a;
}
.cl-check {
    flex: 1;
    min-width: 0;
    margin: 1px 0 0 1px;
    padding: 0 2px;
    background: #9edbdc;
    border: 1px solid #000;
    border-bottom: 0;
}
.cl-row {
    display: flex;
    align-items: center;
    height: 29px;
    gap: 4px;
}
.tick {
    appearance: none;
    width: 13px;
    height: 13px;
    margin: 0 15px 6px 2px;
    border: 2px solid;
    border-color: #4f8080 #d4f6f4 #d4f6f4 #4f8080;
}
.tick:checked {
    background:
        linear-gradient(135deg, transparent 42%, #c01060 42% 62%, transparent 62%) right / 7px 9px no-repeat,
        linear-gradient(#c01060, #c01060) 0 50% / 3px 5px no-repeat;
}
.cl-row label {
    width: 100px;
    overflow: hidden;
    white-space: nowrap;
}
.cl-row .btn, .cl-row .field {
    height: 29px;
    font: 15px "Liberation Mono", monospace;
}
.cl-row .btn.light {
    width: 44px;
}
.cl-row .field {
    flex: 1;
    padding-bottom: 10px;
}
.cl-row .q {
    width: 23px;
    border: 1px solid #000;
    font: bold 22px/21px "Liberation Sans", sans-serif;
}
.cl-actions {
    display: grid;
    grid-template-columns: 1fr 1fr 1fr;
    gap: 4px;
    margin: 6px 0 5px;
}
.cl-actions .btn {
    height: 23px;
}
.cl-run {
    display: flex;
    gap: 5px;
    font: 15px/14px "Liberation Mono", monospace;
    text-align: center;
}
.cl-run .btn {
    width: 29px;
    height: 30px;
}
.cl-run p {
    flex: 1;
}
.alert {
    width: 17px;
    margin: -4px -2px 0 -2px;
    background: #ff181c;
    border: 1px solid #000;
    font: bold 18px/30px "Liberation Serif", serif;
}

.histogram {
    top: 255px;
    left: 1454px;
    right: -6px;
    padding: 0 5px 6px;
    background: linear-gradient(90deg, #14181c, #8c9494 40px, #a0a8a8 70px, #dceeee 90px, #d4e8e8 250px, #dcf4f4 400px, #88c0c0 430px);
}
.histogram header {
    padding-bottom: 3px;
}
.histogram .x {
    margin-right: -4px;
}
.histogram .client {
    padding: 5px 0 0 3px;
    background: #55d0b0;
    border: 1px solid #000;
}
.h-top {
    display: flex;
    gap: 2px;
    margin-right: 2px;
}
.h-side {
    width: 103px;
    display: flex;
    flex-direction: column;
    background: #9edbdc;
    border: 1px solid #000;
}
.radios {
    padding: 0 4px;
    border: solid #000;
    border-width: 0 1px 1px 0;
}
.radios label {
    display: flex;
    align-items: center;
    gap: 6px;
    height: 27px;
}
.radios input {
    appearance: none;
    width: 10px;
    height: 10px;
    margin: 0 2px;
    transform: rotate(45deg);
    border: 2px solid;
    border-color: #d4f6f4 #4f8080 #4f8080 #d4f6f4;
}
.radios input:checked {
    background: #c00858;
    border-color: #4f8080 #fff #fff #4f8080;
}
.h-list {
    display: flex;
    gap: 4px;
    height: 116px;
}
.histogram .list {
    border-color: #4f8080 #d4f6f4 #d4f6f4 #4f8080;
}
.histogram .on {
    color: #9edbdc;
}
.h-tools {
    display: flex;
    gap: 4px;
    padding: 2px;
}
.h-main {
    flex: 1;
    min-width: 0;
    background: #9edbdc;
    border: 1px solid #000;
}
.chart h3 {
    width: max-content;
    height: 22px;
    margin: 2px auto 2px 44px;
    padding: 3px 3px 0;
    background: #b3ffff;
    border: 1px solid #000;
    box-shadow: 2px 2px 0 #507c7c;
    font: italic bold 15px/18px "Liberation Mono", monospace;
}
.bars, .ranges {
    display: flex;
    align-items: flex-end;
    padding-left: 5px;
}
.bars {
    height: 138px;
}
.col {
    width: 56px;
    margin-right: -1px;
    text-align: center;
    line-height: 14px;
}
.col.red {
    color: #e01818;
}
.col i {
    display: block;
    border: 1px solid #000;
}
.red i, pre.red {
    background: #ff1c1c;
}
.yellow i, pre.yellow {
    background: #ffff1c;
}
.ranges {
    padding-bottom: 6px;
    border-top: 4px solid #000;
}
.ranges pre {
    width: 56px;
    height: 29px;
    margin: 1px -1px 0 0;
    padding: 3px 0 0 8px;
    border: 1px solid #000;
    line-height: 14px;
}
.h-bottom {
    display: flex;
    gap: 4px;
    height: 64px;
    margin-top: 1px;
    padding: 0 2px 2px;
    border: solid #000;
    border-width: 2px 1px 2px 2px;
}
.h-bottom .list {
    flex: none;
    width: 73px;
}
.resolution {
    flex: 1;
    min-width: 0;
    display: flex;
    flex-direction: column;
    padding: 0 3px;
    border-left: 1px solid #000;
}
.resolution label {
    text-align: center;
    line-height: 18px;
}
.resolution output {
    padding-left: 4px;
    line-height: 26px;
}
.resolution input {
    appearance: none;
    width: 100%;
    height: 14px;
    margin: 0;
    background: #84b8b8;
    border: 2px solid;
    border-color: #4f8080 #d4f6f4 #d4f6f4 #4f8080;
}
.resolution input::-webkit-slider-thumb {
    appearance: none;
    width: 29px;
    height: 10px;
    background: linear-gradient(90deg, #9edbdc 13px, #4f8080 13px 14px, #9edbdc 14px);
    border: 2px solid;
    border-color: #d4f6f4 #4f8080 #4f8080 #d4f6f4;
}
.sash {
    display: flex;
    align-items: center;
    justify-content: flex-end;
    height: 9px;
    padding-right: 10px;
    background: linear-gradient(#55d0b0 4px, #2c6b5a 4px 5px, #a8f0dc 5px 6px, #55d0b0 6px);
}
.sash i {
    width: 9px;
    height: 9px;
    background: #55d0b0;
    border: 2px solid;
    border-color: #a8f0dc #2c6b5a #2c6b5a #a8f0dc;
}
.board {
    display: grid;
    place-items: center;
    height: 162px;
    margin-right: 2px;
    border: 1px solid #000;
    box-shadow: -1px -1px 0 #2c6b5a, 1px 1px 0 #a8f0dc;
}
.h-foot {
    display: flex;
    gap: 3px;
    margin: 2px 2px 3px 1px;
}
.h-foot .btn {
    height: 40px;
    width: 38px;
}
.h-foot .icon {
    width: 31px;
}
.h-foot p {
    flex: 1;
    padding-left: 3px;
    background: #9edbdc;
    border: 1px solid #000;
    line-height: 38px;
}
.h-close {
    margin-left: -3px;
    padding: 1px;
    background: #9edbdc;
    border-top: 1px solid #000;
}
.h-close .btn {
    width: 100%;
    height: 25px;
}

.viewer {
    left: 2px;
    top: 515px;
    width: 509px;
    padding: 0 7px 6px;
    background:
        linear-gradient(90deg, #8ca4a8, #b0bcc0 60px, #a0b0b4 110px, #60b0b8 125px 150px, #1c2428 158px 290px, #983040 302px 335px, #a858c4 348px 420px, #b87078 432px 470px, #c088d8 490px) top / 100% 28px no-repeat,
        linear-gradient(#90a0a4, #c0c8c8 150px, #88b4bc 152px, #203038 220px, #6c9c78 280px, #1c3028 330px, #7c9c98 450px, #b0ccd8);
}
.viewer .client {
    background: #9edbdc;
    border: 1px solid #000;
}
.v-title {
    padding: 1px;
    border-bottom: 2px solid #000;
}
.v-title .btn {
    width: 100%;
    height: 26px;
    font: bold 15px "Liberation Serif", serif;
}
.v-cols {
    display: grid;
    grid-template-columns: 171px 1fr;
    background: #55d0b0;
    border-bottom: 2px solid #000;
}
.v-left, .v-right {
    display: flex;
    flex-direction: column;
    min-width: 0;
}
.v-left {
    border-right: 3px solid #000;
}
.v-tabs {
    display: flex;
    height: 29px;
    padding: 2px;
    border-bottom: 2px solid #000;
    font-style: italic;
}
.v-tabs .btn {
    width: 46px;
    font-style: italic;
    font-weight: normal;
}
.v-tabs .btn:last-child {
    width: 37px;
}
.v-tabs strong {
    flex: 1;
    margin: -2px 2px;
    background: #9edbdc;
    border: solid #000;
    border-width: 0 1px;
    line-height: 27px;
    text-align: center;
}
.v-scroll {
    flex: 1;
    display: flex;
    gap: 4px;
}
.viewer .list {
    padding-top: 3px;
}
.v-left .hbar {
    margin: 4px 19px 2px 0;
}
.v-replace {
    padding: 1px 2px 1px 6px;
    border-top: 1px solid #000;
}
.v-replace .option {
    height: 30px;
}
.v-cat {
    display: flex;
    height: 31px;
    background: #9edbdc;
}
.v-cat > .btn {
    width: 207px;
    font-style: italic;
}
.v-cat label {
    flex: 1;
    line-height: 31px;
    white-space: nowrap;
}
.v-cat .option {
    width: 61px;
    margin: 1px;
}
.v-right .v-scroll {
    flex: none;
    height: 237px;
}
.v-right .hbar {
    margin: 4px 19px 2px 0;
}
.v-nav {
    display: flex;
    gap: 3px;
    height: 27px;
}
.v-nav .btn {
    width: 45px;
}
.v-nav .default {
    width: 55px;
    outline: 2px solid #000;
    outline-offset: -1px;
}
.v-nav label {
    padding-left: 1px;
    line-height: 25px;
}
.v-nav .field {
    flex: 1;
    width: 0;
    height: 24px;
    padding: 0 4px 4px;
}
.v-zoom {
    display: flex;
    height: 32px;
    line-height: 30px;
}
.v-zoom .option {
    width: 123px;
    border-left-width: 6px;
    border-left-color: #9edbdc;
    outline: 1px solid #000;
    outline-offset: -1px;
}
.v-zoom label {
    padding: 0 1px;
    background: #9edbdc;
    border: solid #000;
    border-width: 1px 0;
}
.v-zoom .lime {
    width: 68px;
    border-left-color: #1be81b;
}
.v-zoom .show {
    display: flex;
    align-items: center;
    gap: 3px;
    height: 28px;
    padding-left: 4px;
    background: none;
    border: 0;
    white-space: nowrap;
}
.show input {
    appearance: none;
    width: 13px;
    height: 13px;
    margin: 0;
    border: 2px solid;
    border-color: #a8f0dc #2c6b5a #2c6b5a #a8f0dc;
}
.v-tools {
    display: flex;
    justify-content: flex-end;
    gap: 4px;
    padding: 2px 1px;
}
.v-tools .undo {
    width: 34px;
}
.v-tools .undo svg {
    width: 28px;
}
.v-result {
    height: 20px;
    background: #55d0b0;
    border-bottom: 1px solid #000;
    line-height: 20px;
    text-align: center;
}
.v-erf {
    height: 21px;
    padding-left: 1px;
    background: #ffffcd;
    border: solid #000;
    border-width: 1px 0;
    line-height: 20px;
}
.v-foot {
    display: flex;
    gap: 4px;
    padding: 2px 1px;
}
.v-foot .icon {
    height: 29px;
}
.v-foot .close {
    flex: 1;
}
.btn.chosen {
    border-color: #f02020;
}
```
